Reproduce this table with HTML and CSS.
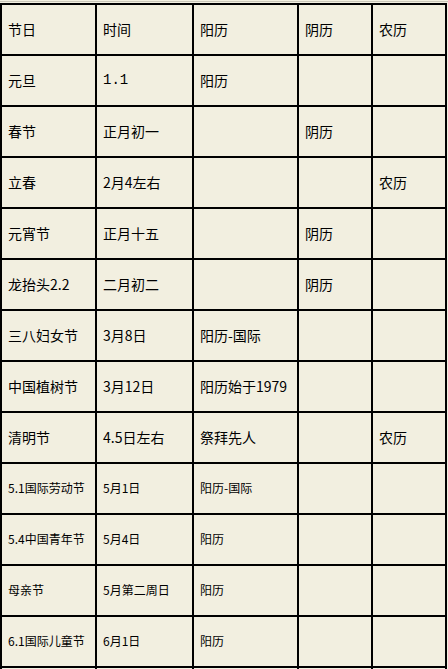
FILE: index.html
```html
<!DOCTYPE html>
<html lang="zh">
<head>
<meta charset="utf-8">
<title>节日</title>
<link rel="stylesheet" href="styles.css">
</head>
<body>
<div class="topline"></div>
<table class="holidays">
  <colgroup>
    <col class="c1"><col class="c2"><col class="c3"><col class="c4"><col class="c5">
  </colgroup>
  <tbody>
    <tr><td>节日</td><td>时间</td><td>阳历</td><td>阴历</td><td>农历</td></tr>
    <tr><td>元旦</td><td class="mono">1.1</td><td>阳历</td><td></td><td></td></tr>
    <tr><td>春节</td><td>正月初一</td><td></td><td>阴历</td><td></td></tr>
    <tr><td>立春</td><td>2月4左右</td><td></td><td></td><td>农历</td></tr>
    <tr><td>元宵节</td><td>正月十五</td><td></td><td>阴历</td><td></td></tr>
    <tr><td>龙抬头2.2</td><td>二月初二</td><td></td><td>阴历</td><td></td></tr>
    <tr><td>三八妇女节</td><td>3月8日</td><td>阳历-国际</td><td></td><td></td></tr>
    <tr><td>中国植树节</td><td>3月12日</td><td>阳历始于1979</td><td></td><td></td></tr>
    <tr><td>清明节</td><td>4.5日左右</td><td>祭拜先人</td><td></td><td>农历</td></tr>
    <tr class="small"><td>5.1国际劳动节</td><td>5月1日</td><td>阳历-国际</td><td></td><td></td></tr>
    <tr class="small"><td>5.4中国青年节</td><td>5月4日</td><td>阳历</td><td></td><td></td></tr>
    <tr class="small"><td>母亲节</td><td>5月第二周日</td><td>阳历</td><td></td><td></td></tr>
    <tr class="small"><td>6.1国际儿童节</td><td>6月1日</td><td>阳历</td><td></td><td></td></tr>
    <tr><td></td><td></td><td></td><td></td><td></td></tr>
  </tbody>
</table>
</body>
</html>
```
FILE: styles.css
```css
html, body {
  margin: 0;
  padding: 0;
  background: #f2efe0;
}
body {
  font-family: "Noto Sans CJK SC", "Liberation Sans", sans-serif;
  color: #000;
}
.topline {
  height: 1px;
  margin-top: 1px;
  margin-bottom: 1px;
  background: #c9c6b8;
}
.holidays {
  border-collapse: collapse;
  table-layout: fixed;
  width: 447px;
  background: #f2efe0;
}
.c1 { width: 95px; }
.c2 { width: 97px; }
.c3 { width: 105px; }
.c4 { width: 74px; }
.c5 { width: 74px; }
.holidays td {
  border: 2px solid #000;
  height: 51px;
  padding: 0 0 2px 6px;
  box-sizing: border-box;
  font-size: 14px;
  line-height: 16px;
  vertical-align: middle;
  white-space: nowrap;
  overflow: hidden;
}
.holidays td.mono {
  font-family: "Liberation Mono", monospace;
  font-size: 14px;
}
.holidays tr.small td {
  font-size: 12px;
}
```
